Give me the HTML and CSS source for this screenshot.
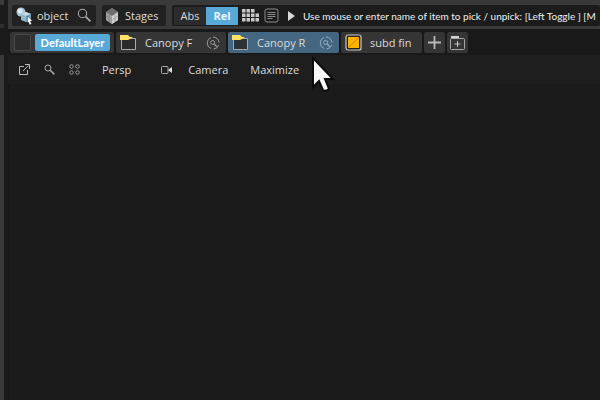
FILE: index.html
```html
<!DOCTYPE html>
<html lang="en">
<head>
    <meta charset="UTF-8">
    <meta name="viewport" content="width=device-width, initial-scale=1.0">
    <title>Viewport</title>
    <link rel="stylesheet" href="styles.css">
</head>
<body>
    <div class="side-rail"></div>

    <div class="workspace">
        <!-- Main toolbar -->
        <header class="toolbar">
            <div class="group group-pick">
                <button class="tool" type="button">
                    <svg class="icon" width="18" height="18" viewBox="0 0 18 18">
                        <circle cx="5" cy="5" r="4.5" fill="#a9c6d6"/>
                        <circle cx="4" cy="4" r="2.5" fill="#dcebf2"/>
                        <path d="M5 7l5-2 5 2v6l-5 2-5-2z" fill="#8fb6cb"/>
                        <path d="M5 7l5-2 5 2-5 2z" fill="#c5dce8"/>
                        <path d="M10 9l5-2v6l-5 2z" fill="#6f9cb6"/>
                        <path d="M11.5 9l5 5h-2l1 3-2 1-1-3-1 1z" fill="#fff" stroke="#222" stroke-width=".4"/>
                    </svg>
                    <span>object</span>
                </button>
                <button class="icon-button" type="button" aria-label="Search">
                    <svg class="icon" width="15" height="15" viewBox="0 0 15 15" fill="none" stroke="#aaa">
                        <circle cx="5.5" cy="5.5" r="4.2" stroke-width="1.1"/>
                        <path d="M8.7 8.7l4.7 4.7" stroke-width="1.7"/>
                    </svg>
                </button>
            </div>

            <div class="group group-stages">
                <button class="tool" type="button">
                    <svg class="icon" width="14" height="16" viewBox="0 0 14 16">
                        <path d="M7 0l6 4v8l-6 4-6-4V4z" fill="#8c8c8c"/>
                        <path d="M7 0l6 4-6 4-6-4z" fill="#6d6d6d"/>
                        <path d="M1 4l6 4v8l-6-4z" fill="#a0a0a0"/>
                        <path d="M7 8l6-4v8l-6 4z" fill="#d2d2d2"/>
                        <path d="M1 8l6 4 6-4M4 6v8M10 6v8" fill="none" stroke="#777" stroke-width=".5"/>
                    </svg>
                    <span>Stages</span>
                </button>
            </div>

            <div class="group group-command">
                <button class="mode" type="button">Abs</button>
                <button class="mode mode-active" type="button">Rel</button>
                <button class="icon-button grid-button" type="button" aria-label="Grid">
                    <svg class="icon" width="18" height="13" viewBox="0 0 18 13" fill="#c8c8c8">
                        <path d="M0 0h3.5v3.5H0zM4.5 0H8v3.5H4.5zM9 0h3.5v3.5H9zM0 4.5h3.5V8H0zM4.5 4.5H8V8H4.5zM9 4.5h3.5V8H9zM13.5 4.5H17V8h-3.5zM0 9h3.5v3.5H0zM4.5 9H8v3.5H4.5zM9 9h3.5v3.5H9zM13.5 9H17v3.5h-3.5z"/>
                    </svg>
                </button>
                <button class="icon-button" type="button" aria-label="History">
                    <svg class="icon" width="15" height="15" viewBox="0 0 15 15" fill="none" stroke="#8c8c8c">
                        <rect x="1" y="1" width="13" height="13" rx="2"/>
                        <path d="M3.5 4.5h8M3.5 6.5h8M3.5 8.5h8M3.5 10.5h5"/>
                    </svg>
                </button>
                <svg class="icon arrow" width="7" height="10" viewBox="0 0 7 10"><path d="M0 0l7 5-7 5z" fill="#d8d8d8"/></svg>
                <p class="prompt">Use mouse or enter name of item to pick / unpick: [Left Toggle ] [M</p>
            </div>
        </header>

        <!-- Layers -->
        <nav class="layers">
            <div class="layer layer-default">
                <button class="swatch" type="button" aria-label="Layer color"></button>
                <button class="layer-name layer-current" type="button">DefaultLayer</button>
            </div>
            <div class="layer layer-folder">
                <svg class="icon" width="17" height="17" viewBox="0 0 17 17">
                    <path d="M1.5 4.5h14v11h-14z" fill="#2b2b2b" stroke="#aaa"/>
                    <path d="M0 6V1h8l2 2h3L10 5 8 6z" fill="#ffe066"/>
                </svg>
                <button class="layer-name" type="button">Canopy F</button>
                <button class="icon-button" type="button" aria-label="Isolate Canopy F">
                    <svg class="icon" width="14" height="14" viewBox="0 0 14 14" fill="none" stroke="#9a9a9a">
                        <path d="M5 12.5A5.9 5.9 0 0 1 5 1.5M7 1A6 6 0 0 1 13 6.5M12.7 9A6 6 0 0 1 7.5 13"/>
                        <circle cx="6.7" cy="6.5" r="2"/>
                        <path d="M8.2 8l2.5 2.5" stroke-width="1.3"/>
                    </svg>
                </button>
            </div>
            <div class="layer layer-folder layer-selected">
                <svg class="icon" width="17" height="17" viewBox="0 0 17 17">
                    <path d="M1.5 4.5h14v11h-14z" fill="#2b3238" stroke="#a5a8aa"/>
                    <path d="M0 6V1h8l2 2h3L10 5 8 6z" fill="#ffe066"/>
                </svg>
                <button class="layer-name" type="button">Canopy R</button>
                <button class="icon-button" type="button" aria-label="Isolate Canopy R">
                    <svg class="icon" width="14" height="14" viewBox="0 0 14 14" fill="none" stroke="#8fadc4">
                        <path d="M5 12.5A5.9 5.9 0 0 1 5 1.5M7 1A6 6 0 0 1 13 6.5M12.7 9A6 6 0 0 1 7.5 13"/>
                        <circle cx="6.7" cy="6.5" r="2"/>
                        <path d="M8.2 8l2.5 2.5" stroke-width="1.3"/>
                    </svg>
                </button>
            </div>
            <div class="layer layer-subd">
                <svg class="icon" width="17" height="17" viewBox="0 0 17 17">
                    <rect x="1" y="1" width="15" height="15" rx="2" fill="#26221a" stroke="#ccc" stroke-width="1.2"/>
                    <path d="M3 3h11v11H3z" fill="#ffb400"/>
                    <path d="M3 14L14 3" stroke="#b47a00" stroke-width=".8"/>
                </svg>
                <button class="layer-name" type="button">subd fin</button>
            </div>
            <button class="layer layer-add" type="button" aria-label="Add layer">
                <svg class="icon" width="13" height="13" viewBox="0 0 13 13"><path d="M6.5 0v13M0 6.5h13" stroke="#b8b8b8" stroke-width="1.8"/></svg>
            </button>
            <button class="layer layer-add" type="button" aria-label="Add layer folder">
                <svg class="icon" width="15" height="15" viewBox="0 0 15 15" fill="none" stroke="#a8a8a8">
                    <rect x=".5" y="3.5" width="14" height="11" rx="1"/>
                    <path d="M1 2h8" stroke="#d0d0d0" stroke-width="2"/>
                    <path d="M7.5 6v6M4.5 9h6" stroke="#c8c8c8"/>
                </svg>
            </button>
        </nav>

        <!-- Viewport -->
        <main class="viewport">
            <div class="view-menu">
                <button class="icon-button" type="button" aria-label="Pop out">
                    <svg class="icon" width="11" height="11" viewBox="0 0 11 11" fill="none" stroke="#bbb">
                        <path d="M5 2.5H.5v8h8V6M4 7l5.5-5.5M6 .5h4.5V5"/>
                    </svg>
                </button>
                <button class="icon-button" type="button" aria-label="Zoom">
                    <svg class="icon" width="11" height="11" viewBox="0 0 11 11" fill="none" stroke="#aaa">
                        <circle cx="4" cy="4" r="3"/>
                        <path d="M6.2 6.2l4.2 4.2" stroke-width="1.5"/>
                    </svg>
                </button>
                <button class="icon-button" type="button" aria-label="Layout">
                    <svg class="icon" width="11" height="11" viewBox="0 0 11 11" fill="none" stroke="#9a9a9a">
                        <circle cx="2.5" cy="2.5" r="1.8"/>
                        <circle cx="8.5" cy="2.5" r="1.8"/>
                        <circle cx="2.5" cy="8.5" r="1.8"/>
                        <circle cx="8.5" cy="8.5" r="1.8"/>
                    </svg>
                </button>
                <button class="view-item" type="button">Persp</button>
                <button class="view-item view-camera" type="button">
                    <svg class="icon" width="11" height="8" viewBox="0 0 11 8">
                        <rect x=".5" y=".5" width="6.5" height="7" rx="1" fill="none" stroke="#aaa"/>
                        <path d="M7.5 3.5L11 1v6L7.5 4.5z" fill="#ddd"/>
                    </svg>
                    <span>Camera</span>
                </button>
                <button class="view-item" type="button">Maximize</button>
            </div>
            <div class="canvas"></div>
        </main>
    </div>

    <svg class="pointer" width="24" height="38" viewBox="0 0 24 38">
        <path d="M2 2v29l6-6 4 9q3 2 6-1l-4-10h8z" fill="#f8f8f8" stroke="#0c0c0c" stroke-width="2"/>
    </svg>
</body>
</html>
```

FILE: styles.css
```css
* {
    margin: 0;
    padding: 0;
    box-sizing: border-box;
}

body {
    display: flex;
    min-height: 100vh;
    overflow: hidden;
    background-color: #1b1b1b;
    color: #dcdcdc;
    font-family: "Open Sans", "Noto Sans", sans-serif;
    font-size: 11px;
    line-height: 16px;
}

button {
    border: none;
    background: none;
    color: inherit;
    font: inherit;
    white-space: nowrap;
}

.icon {
    display: block;
    flex: none;
}

/* Strip on the left edge */
.side-rail {
    flex: none;
    width: 8px;
    background: linear-gradient(#3a3a3a 5px, #1b1b1b 5px 24px, #2e2e2e 24px 28px, #1b1b1b 28px 55px, #3a3a3a 55px);
    border-right: 4px solid #1b1b1b;
}

.workspace {
    display: flex;
    flex: 1;
    flex-direction: column;
    min-width: 0;
}

/* Main toolbar */
.toolbar {
    display: flex;
    gap: 6px;
    padding: 5px 0 3px 4px;
    background-color: #393939;
    border-bottom: 3px solid #191919;
}

.group {
    display: flex;
    align-items: center;
    flex: none;
    height: 21px;
    background-color: #212121;
    border-radius: 2px;
}

.group-pick {
    justify-content: space-between;
    width: 84px;
    padding: 0 4px;
}

.group-stages {
    width: 64px;
    padding: 0 3px;
}

.group-command {
    flex: 1;
    min-width: 0;
    overflow: hidden;
    padding-left: 2px;
    background-color: #1c1c1c;
}

.tool {
    display: flex;
    align-items: center;
    gap: 3px;
}

.group-stages .tool {
    gap: 6px;
}

.mode {
    flex: none;
    width: 32px;
    height: 18px;
    background-color: #2b2b2b;
}

.mode-active {
    background-color: #58a9d8;
    color: #e8f6ff;
    font-weight: bold;
}

.grid-button {
    margin: 0 4px;
}

.arrow {
    margin: 0 8px 0 9px;
}

.prompt {
    color: #f0f0f0;
    font-family: Lato, "Open Sans", sans-serif;
    font-size: 10px;
    white-space: nowrap;
}

/* Layers */
.layers {
    display: flex;
    gap: 2px;
    height: 23px;
    padding: 0 0 2px 2px;
    background-color: #191919;
}

.layer {
    display: flex;
    align-items: center;
    flex: none;
    background-color: #353535;
    border-radius: 2px;
}

.layer-default {
    gap: 4px;
    width: 104px;
    padding: 0 4px;
}

.layer-folder {
    gap: 8px;
    width: 110px;
    padding: 0 6px 0 4px;
}

.layer-folder .icon-button {
    margin-left: auto;
}

.layer-selected {
    width: 111px;
    background-color: #456681;
}

.layer-subd {
    gap: 8px;
    width: 81px;
    padding: 0 4px;
}

.layer-add {
    justify-content: center;
    width: 21px;
}

.swatch {
    width: 17px;
    height: 17px;
    background-color: #2c2c2c;
    border: 1px solid #484848;
    border-radius: 2px;
}

.layer-current {
    flex: 1;
    height: 17px;
    background-color: #58a9d8;
    border-radius: 2px;
    color: #f4fbff;
    font-family: Lato, "Open Sans", sans-serif;
    font-weight: 900;
}

/* Viewport */
.viewport {
    display: flex;
    flex: 1;
    flex-direction: column;
}

.view-menu {
    display: flex;
    align-items: center;
    gap: 14px;
    height: 29px;
    padding-left: 11px;
    background-color: #1e1e1e;
}

.view-item {
    margin-left: 8px;
}

.view-camera {
    display: flex;
    align-items: center;
    gap: 16px;
    margin-left: 16px;
}

.canvas {
    flex: 1;
    background-color: #1b1b1b;
    border-left: 1px solid #161616;
}

/* Mouse pointer over the viewport */
.pointer {
    position: absolute;
    top: 56px;
    left: 311px;
}
```
